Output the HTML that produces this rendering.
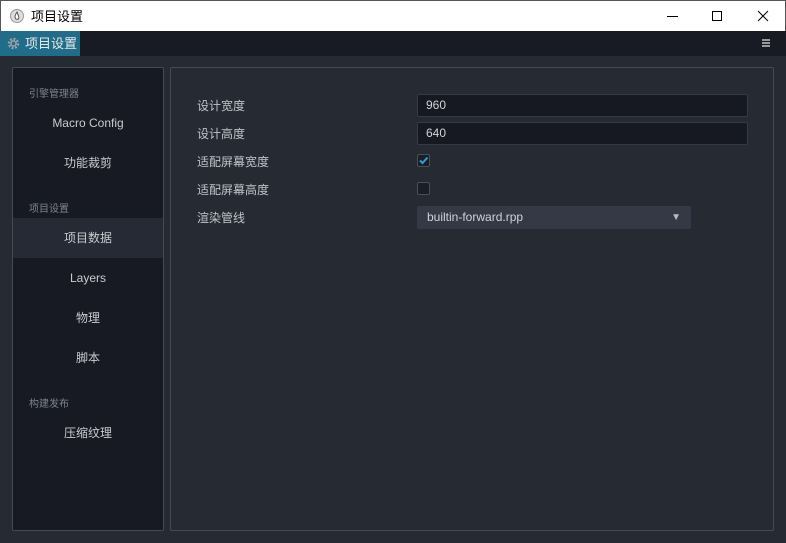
<!DOCTYPE html>
<html><head><meta charset="utf-8"><style>
*{margin:0;padding:0;box-sizing:border-box}
body{width:786px;height:543px;overflow:hidden;background:#262a33;font-family:"Liberation Sans","Noto Sans CJK SC",sans-serif;position:relative;color:#ccc}
.title{position:absolute;left:0;top:0;width:786px;height:31px;background:#fff;border:1px solid #555;border-bottom:none}
.title span{position:absolute;left:30px;top:5px;font-size:13px;color:#000}
.tabbar{position:absolute;left:0;top:31px;width:786px;height:25px;background:#181b24}
.tab{position:absolute;left:0;top:0;width:80px;height:25px;background:#1f6d88;color:#e8e8e8;font-size:13px;line-height:25px;padding-left:25px}
.side{position:absolute;left:12px;top:67px;width:152px;height:464px;background:#171a22;border:1px solid #454a56;border-radius:2px}
.main{position:absolute;left:170px;top:67px;width:604px;height:464px;background:#262a33;border:1px solid #454a56;border-radius:2px}
.h{position:absolute;left:16px;font-size:10px;color:#7d828c}
.it{position:absolute;left:0;width:150px;text-align:center;font-size:12px;color:#c8cbd0;height:40px;line-height:40px}
.lab{position:absolute;left:26px;font-size:12px;color:#c0c3c8}
.inp{position:absolute;left:246px;width:331px;height:23px;background:#161921;border:1px solid #363a45;border-radius:2px;font-size:12px;color:#d0d3d8;padding-left:8px;line-height:21px}
.cb{position:absolute;left:246px;width:13px;height:13px;background:#1b1e27;border:1px solid #4a4e59;border-radius:2px}
</style></head><body>
<div class="title">
<svg style="position:absolute;left:9px;top:8px" width="14" height="14" viewBox="0 0 14 14"><circle cx="7" cy="7" r="6.5" fill="#ddd" stroke="#999"/><path d="M7 3 C5 6 4.5 8 5.5 9.5 C6.5 11 8.5 10.5 8.8 9 C9 7.5 8 6 7 3Z" fill="#fff" stroke="#555" stroke-width="1"/></svg>
<span>项目设置</span>
<div style="position:absolute;left:666px;top:15px;width:11px;height:1px;background:#000"></div>
<div style="position:absolute;left:711px;top:10px;width:10px;height:10px;border:1px solid #000"></div>
<svg style="position:absolute;left:756px;top:9px" width="12" height="12"><path d="M1 1L11 11M11 1L1 11" stroke="#000" stroke-width="1"/></svg>
</div>
<div class="tabbar"><div class="tab">
<svg style="position:absolute;left:7px;top:6px" width="13" height="13" viewBox="0 0 13 13"><circle cx="6.5" cy="6.5" r="4.5" fill="none" stroke="#9aa0a8" stroke-width="2.5" stroke-dasharray="2 1.5"/><circle cx="6.5" cy="6.5" r="2.5" fill="none" stroke="#9aa0a8" stroke-width="1.5"/></svg>项目设置</div>
<div style="position:absolute;left:762px;top:8px;width:8px;height:2px;background:#999;box-shadow:0 3px 0 #999,0 6px 0 #999"></div>
</div>
<div class="side">
<div class="h" style="top:17px">引擎管理器</div>
<div class="it" style="top:35px">Macro Config</div>
<div class="it" style="top:75px">功能裁剪</div>
<div class="h" style="top:132px">项目设置</div>
<div class="it" style="top:150px;background:#262a34">项目数据</div>
<div class="it" style="top:190px">Layers</div>
<div class="it" style="top:230px">物理</div>
<div class="it" style="top:270px">脚本</div>
<div class="h" style="top:327px">构建发布</div>
<div class="it" style="top:345px">压缩纹理</div>
</div>
<div class="main">
<div class="lab" style="top:29px">设计宽度</div>
<div class="inp" style="top:26px">960</div>
<div class="lab" style="top:57px">设计高度</div>
<div class="inp" style="top:54px">640</div>
<div class="lab" style="top:85px">适配屏幕宽度</div>
<div class="cb" style="top:86px"><svg width="11" height="11" style="position:absolute;left:0;top:0"><path d="M2 5.5L4.5 8L9.5 2.5" stroke="#3a9ccc" stroke-width="2" fill="none"/></svg></div>
<div class="lab" style="top:113px">适配屏幕高度</div>
<div class="cb" style="top:114px"></div>
<div class="lab" style="top:141px">渲染管线</div>
<div style="position:absolute;left:246px;top:138px;width:274px;height:23px;background:#343945;border-radius:2px;font-size:12px;color:#d0d3d8;padding-left:10px;line-height:23px">builtin-forward.rpp<span style="position:absolute;right:10px;top:0;font-size:10px;color:#bbb">▼</span></div>
</div>
</body></html>
